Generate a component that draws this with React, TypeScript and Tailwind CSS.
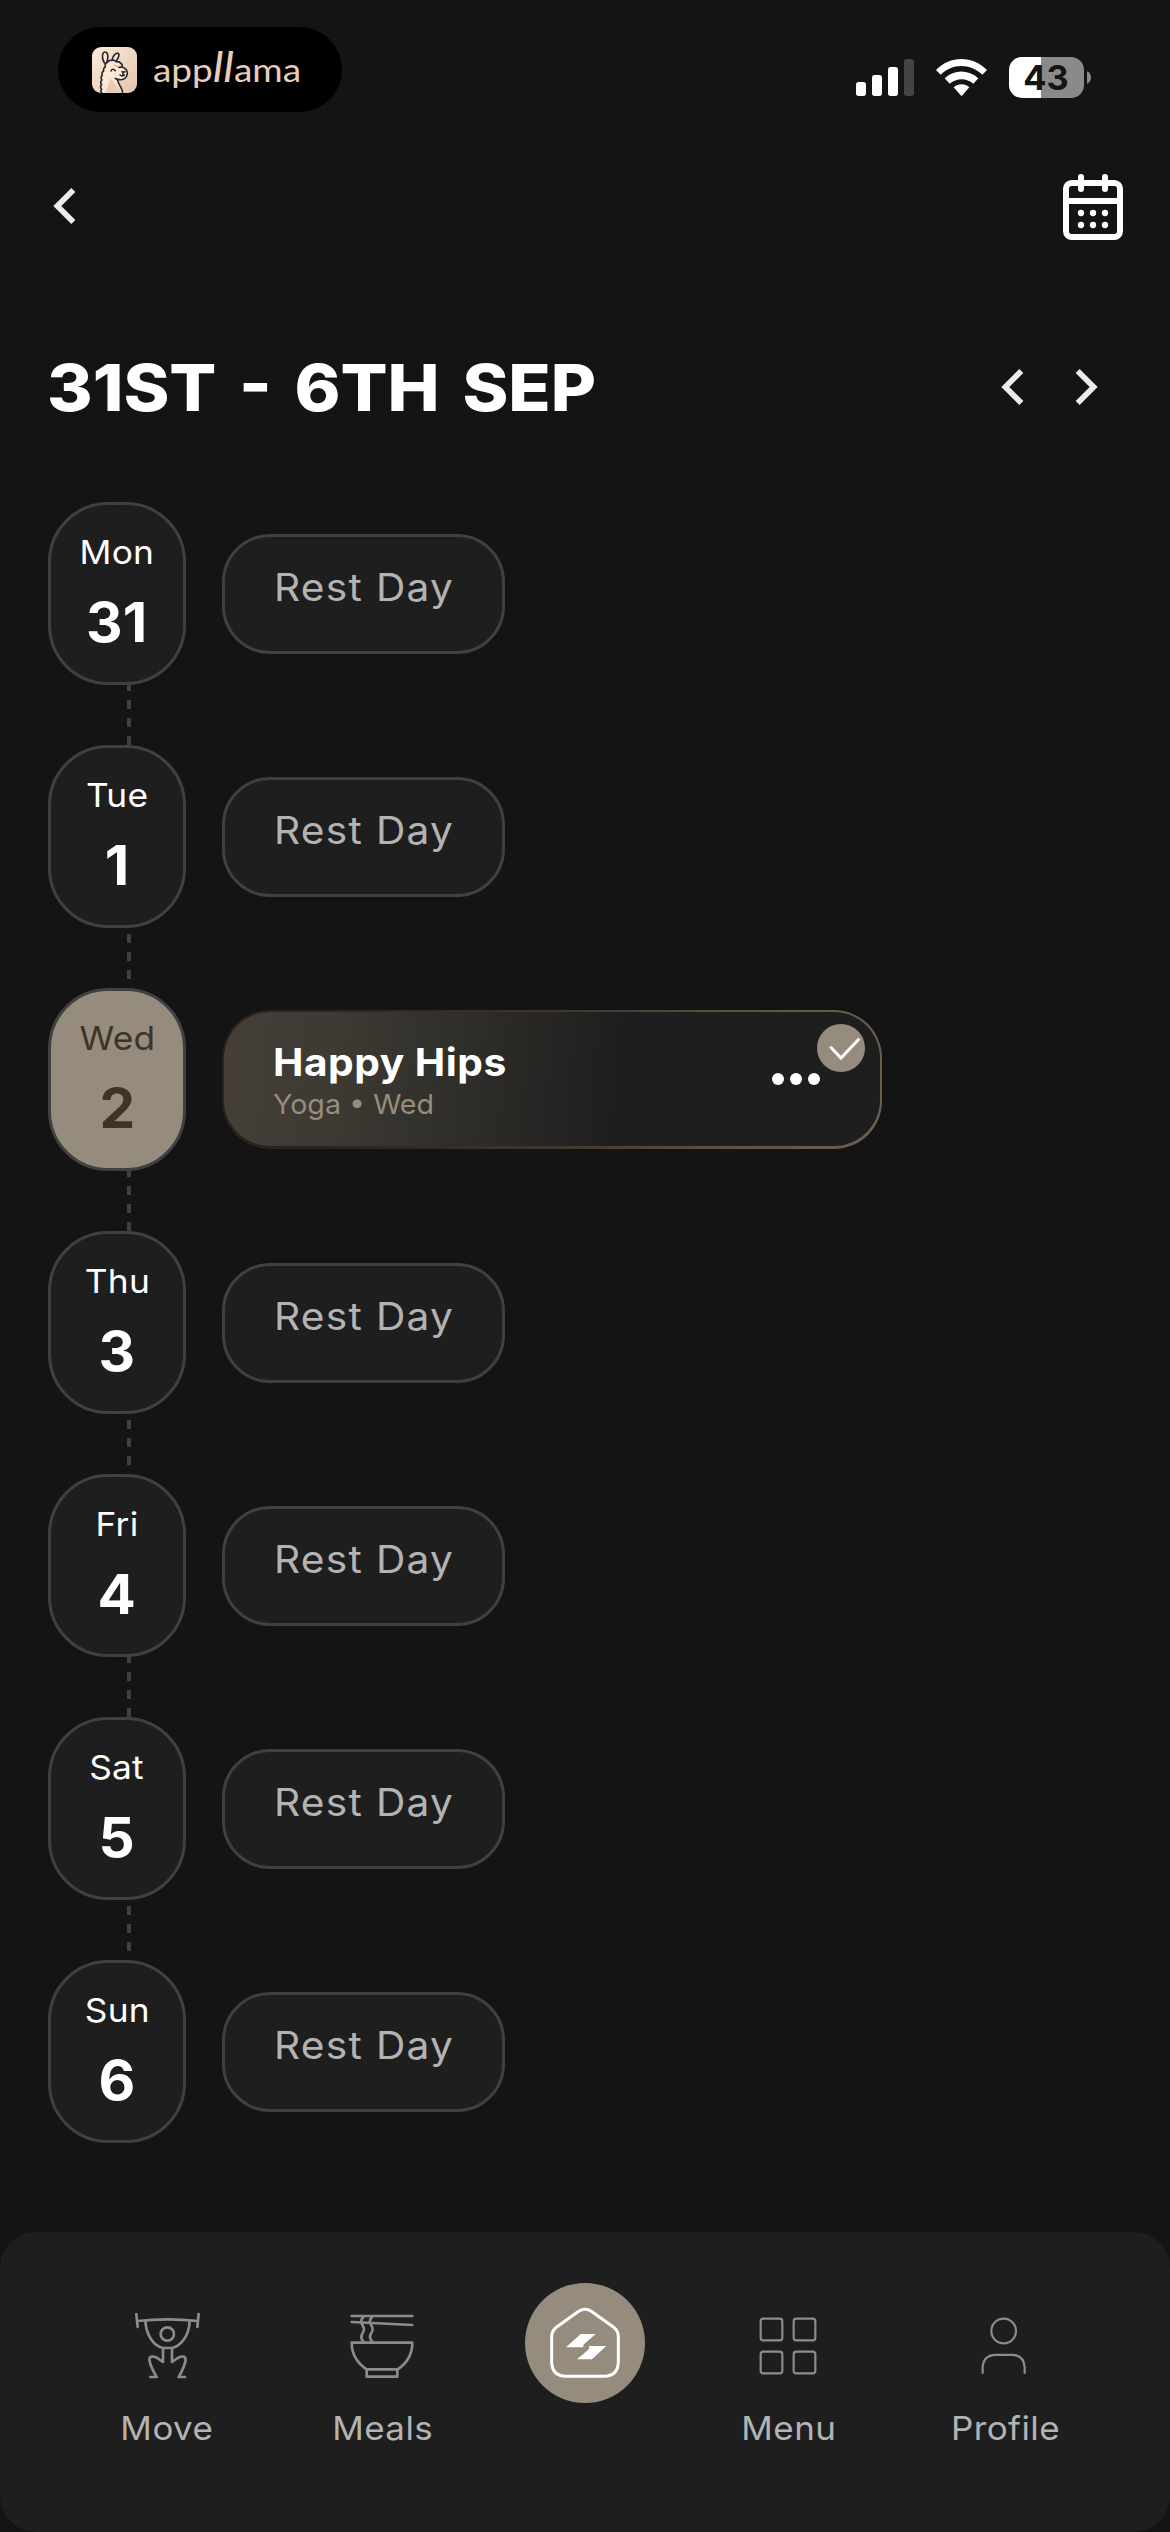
import React from "react";

type Day = { name: string; date: string; active?: boolean };

const days: Day[] = [
  { name: "Mon", date: "31" },
  { name: "Tue", date: "1" },
  { name: "Wed", date: "2", active: true },
  { name: "Thu", date: "3" },
  { name: "Fri", date: "4" },
  { name: "Sat", date: "5" },
  { name: "Sun", date: "6" },
];

function BrandPill() {
  return (
    <div className="flex h-[85px] w-[284px] items-center rounded-full bg-black pl-[34px]">
      <svg className="h-[46px] w-[45px] shrink-0" viewBox="160 108 135 138" fill="none">
        <defs>
          <linearGradient id="tile" x1="0" y1="0" x2="1" y2="1">
            <stop offset="0" stopColor="#fbe9da" />
            <stop offset="1" stopColor="#e6c6ab" />
          </linearGradient>
          <clipPath id="tileClip">
            <rect x="160" y="108" width="135" height="138" rx="27" />
          </clipPath>
        </defs>
        <g clipPath="url(#tileClip)">
          <rect x="160" y="108" width="135" height="138" fill="url(#tile)" />
          <path
            d="M188 248q-6-8 0-14-7-7 0-14-6-7 1-14-5-8 2-13-3-8 4-13-2-8 4-12-1-7 3-10c-8-10-11-36 0-35 9 0 10 14 6 30q6-4 12-3c2-10 10-26 16-23 7 3 3 17-4 26 8 0 14 5 15 12q6 4 2 9c10 0 19 8 18 17 0 10-8 16-19 17q-10 0-15-2c0 14 13 25 17 43z"
            fill="#fbe8d8"
          />
          <path d="M216 202c13 16 22 26 34 44h-50z" fill="#ecccb0" />
          <g stroke="#25272a" strokeWidth="4.8" strokeLinecap="round" strokeLinejoin="round">
            <path d="M190 246q-6-5-1-12-7-6 0-13-6-7 1-14-6-8 1-14-4-8 4-13-2-9 5-12-2-7 2-10" />
            <path d="M200 158c-11-9-12-37 0-35 10 1 9 20 4 32" />
            <path d="M206 154q5-7 14-6c1-9 10-24 18-21 6 3 1 15-6 24" />
            <path d="M220 148q8-2 12 4 11-1 16 6 6 6 0 9-4 4-8 1M249 168c12 2 18 12 17 20-1 12-11 19-23 18q-9 0-13-4" />
            <path d="M217 180q5-10 13-1M244 192q6 5 13 0M253 186v5M250 182q5 2 9 0M237 206c0 13 13 21 15 39" />
          </g>
          <path d="M225 162q8 7 18 4" stroke="#cf9f77" strokeWidth="3" />
        </g>
      </svg>
      <svg className="ml-[15px] h-[60px] w-[154px]" viewBox="0 0 154 60">
        <text
          x="1"
          y="42"
          fill="#e8cdb9"
          fontSize="33"
          textLength="148"
          lengthAdjust="spacingAndGlyphs"
          fontFamily="Lato, sans-serif"
        >
          app
          <tspan fontSize="42" fontStyle="italic">ll</tspan>
          ama
        </text>
      </svg>
    </div>
  );
}

function StatusIcons() {
  return (
    <svg className="h-[43px] w-[237px]" viewBox="75 48 711 129" fill="none">
      <g fill="#fff">
        <rect x="78" y="126" width="30" height="42" rx="8" />
        <rect x="126" y="105" width="30" height="63" rx="8" />
        <rect x="174" y="81" width="30" height="87" rx="8" />
        <rect x="222" y="57" width="30" height="111" rx="8" fill="#444" />
        <path d="M318 90C360 46 428 46 471 90L457 104C422 69 366 69 332 104Z" />
        <path d="M344 115C373 88 415 88 445 115L430 131C410 113 380 113 359 131Z" />
        <path d="M371 142C384 130 405 130 418 142L397 166Q394.500 169 392 166Z" />
      </g>
      <defs>
        <clipPath id="battery">
          <rect x="537" y="51" width="225" height="123" rx="39" />
        </clipPath>
      </defs>
      <g clipPath="url(#battery)">
        <rect x="537" y="51" width="96" height="123" fill="#fff" />
        <rect x="633" y="51" width="130" height="123" fill="#8a8a8a" />
      </g>
      <path d="M771 94c8 3 12 10 12 18.500s-4 15.500-12 18.500z" fill="#8a8a8a" />
      <text
        x="648"
        y="150"
        textAnchor="middle"
        fill="#141414"
        fontSize="103"
        fontWeight="700"
        textLength="136"
        fontFamily="Inter, sans-serif"
      >
        43
      </text>
    </svg>
  );
}

function CalendarIcon() {
  return (
    <svg className="h-[70px] w-[64px]" viewBox="693 396 192 210" fill="none" stroke="#fff" strokeWidth="18">
      <rect x="708" y="429" width="162" height="162" rx="17" />
      <path d="M708 483h162" />
      <path d="M753 411v36M825 411v36" strokeLinecap="round" />
      <g fill="#fff" stroke="none">
        {[753, 789, 825].map((x) => (
          <g key={x}>
            <circle cx={x} cy="519" r="9.500" />
            <circle cx={x} cy="555" r="9.500" />
          </g>
        ))}
      </g>
    </svg>
  );
}

function Chevron({ flip }: { flip?: boolean }) {
  return (
    <svg
      className={flip ? "h-[40px] w-[27px] -scale-x-100" : "h-[40px] w-[27px]"}
      viewBox="120 81 81 120"
      fill="none"
      stroke="#ececec"
      strokeWidth="17"
    >
      <path d="M184 93L136 141L184 189" />
    </svg>
  );
}

function RestPill() {
  return (
    <div className="h-[120px] w-[283px] rounded-[48px] border-[3px] border-[#404040] bg-[#1e1e1e] pt-[26px] pl-[49px]">
      <p className="origin-left scale-x-107 text-[38px] leading-[48px] tracking-[1.2px] whitespace-nowrap text-[#b3b3b3]">
        Rest Day
      </p>
    </div>
  );
}

function WorkoutCard() {
  return (
    <div className="h-[139px] w-[660px] rounded-[48px] bg-[linear-gradient(95deg,#25221f_0%,#2b2721_20%,#40372d_52%,#5c503f_75%,#6c5f4d_100%)] pt-[2px] pr-[2px] pb-[3px] pl-[2px]">
      <div className="relative h-full rounded-[46px] bg-[linear-gradient(95deg,#453f38_0%,#3d3933_18%,#31302b_33%,#272624_48%,#1e1e1e_60%)] pt-[26px] pl-[49px]">
        <p className="w-fit origin-left scale-x-107 text-[38px] leading-[48px] font-bold tracking-[0.5px] text-white">
          Happy Hips
        </p>
        <p className="mt-px w-fit origin-left scale-x-104 text-[27.5px] leading-[34px] text-[#978c7d]">Yoga • Wed</p>
        <svg className="absolute top-[9px] right-[8px] h-[60px] w-[108px]" viewBox="0 0 108 60" fill="none">
          <circle cx="77" cy="27" r="24" fill="#968c7d" />
          <path d="M67 26.500L77 37L94.500 18.500" stroke="#fff" strokeWidth="3" strokeLinecap="round" />
        </svg>
        <div className="absolute top-[61px] right-[60px] flex gap-[6px]">
          <span className="size-3 rounded-full bg-white" />
          <span className="size-3 rounded-full bg-white" />
          <span className="size-3 rounded-full bg-white" />
        </div>
      </div>
    </div>
  );
}

function DayRow({ day, index }: { day: Day; index: number }) {
  const dash =
    index % 2 === 0
      ? "ml-[79px] h-[60px] w-[4px] bg-[repeating-linear-gradient(to_bottom,#404040_0px,#404040_6px,transparent_6px,transparent_15px,#404040_15px,#404040_18px)]"
      : "ml-[79px] h-[60px] w-[4px] bg-[repeating-linear-gradient(to_bottom,transparent_0px,transparent_6px,#404040_6px,#404040_15px,transparent_15px,transparent_18px)]";
  return (
    <div>
      <div className="flex items-center gap-9">
        <div
          className={
            "flex h-[183px] w-[138px] flex-col items-center rounded-[60px] border-[3px] border-[#404040] pt-[27px] " +
            (day.active ? "bg-[#968c7d] text-[#3d3327]" : "bg-[#1e1e1e] text-white")
          }
        >
          <span className="scale-x-107 text-[33px] leading-[40px] tracking-[0.2px]">{day.name}</span>
          <span className="mt-5 scale-x-103 text-[55px] leading-[60px] font-bold">{day.date}</span>
        </div>
        {day.active ? <WorkoutCard /> : <RestPill />}
      </div>
      {index < days.length - 1 && <div className={dash} />}
    </div>
  );
}

function NavItem({ label, children }: { label: string; children: React.ReactNode }) {
  return (
    <div className="flex w-[216px] flex-col items-center pt-[78px]">
      {children}
      <span className="mt-[26px] ml-[2px] scale-x-106 text-[33px] leading-[40px] tracking-[0.4px] text-[#b3b3b3]">
        {label}
      </span>
    </div>
  );
}

function BottomNav() {
  return (
    <nav className="mt-[89px] flex h-[300px] rounded-[36px] bg-[#1e1e1e] pl-[58px]">
      <NavItem label="Move">
        <svg className="size-[72px]" viewBox="90 120 216 216" fill="none" stroke="#8c8c8c" strokeWidth="8" strokeLinecap="round" strokeLinejoin="round">
          <path d="M109 132L113 171M296 132L292 171M112 153Q202 143 293 153" />
          <path d="M136 152C138 196 162 230 190 234H215C244 229 268 195 269 152" />
          <circle cx="202" cy="192" r="20" />
          <path d="M189 235V276L170 263C156 256 145 259 149 275C153 292 161 306 170 321H151" />
          <path d="M216 235V276L235 263C249 256 260 259 256 275C252 292 245 306 236 321H255" />
        </svg>
      </NavItem>
      <NavItem label="Meals">
        <svg className="size-[72px]" viewBox="738 120 216 216" fill="none" stroke="#8c8c8c" strokeWidth="8" strokeLinecap="round" strokeLinejoin="round">
          <path d="M755 138H937M755 156L937 165" />
          <path d="M790 141C780 152 783 158 789 168C795 178 792 184 786 193C782 201 784 207 789 214" />
          <path d="M816 141C806 152 809 158 815 168C821 178 818 184 812 193C808 201 810 207 816 214" />
          <path d="M755 218H937C937 252 921 279 893 298H800C772 279 755 252 755 218Z" />
          <path d="M800 299V320H892V299" />
        </svg>
      </NavItem>
      <div className="flex w-[190px] justify-center pt-[51px]">
        <svg className="size-[120px]" viewBox="75 69 360 360" fill="none">
          <circle cx="255" cy="249" r="180" fill="#968c7d" />
          <path
            d="M236 154Q255 142 274 154L340 201Q355 212 355 229V307Q353 348 313 348.500H197Q157 348 155 307V229Q155 212 170 201Z"
            stroke="#fff"
            strokeWidth="9"
            strokeLinejoin="round"
          />
          <path d="M242 222H287L255 250Q249 254 249 262H198Z" fill="#fff" />
          <path d="M267 258H319L276 298H231L265 269Q270 264 267 258Z" fill="#fff" />
        </svg>
      </div>
      <NavItem label="Menu">
        <svg className="size-[72px]" viewBox="156 90 216 216" fill="none" stroke="#8c8c8c" strokeWidth="6.500">
          <rect x="182" y="116" width="65" height="65" rx="8" />
          <rect x="281" y="116" width="65" height="65" rx="8" />
          <rect x="182" y="215" width="65" height="65" rx="8" />
          <rect x="281" y="215" width="65" height="65" rx="8" />
        </svg>
      </NavItem>
      <NavItem label="Profile">
        <svg className="size-[72px]" viewBox="802 90 216 216" fill="none" stroke="#8c8c8c" strokeWidth="6.500" strokeLinecap="round">
          <circle cx="909" cy="153" r="37" />
          <path d="M846 279V262Q848 226 884 224.500H936Q970 226 972 262V279" />
        </svg>
      </NavItem>
    </nav>
  );
}

export default function App() {
  return (
    <div className="h-[2532px] w-[1170px] overflow-hidden bg-[#141414] font-[Inter,sans-serif] text-white">
      <header className="pt-[27px] pr-[45px] pl-[48px]">
        <div className="flex h-[85px] items-start justify-between pr-[33px] pl-[10px]">
          <BrandPill />
          <div className="pt-[29px]">
            <StatusIcons />
          </div>
        </div>
        <div className="mt-[60px] flex items-start justify-between">
          <div className="pt-[14px] pl-[4px]">
            <Chevron />
          </div>
          <CalendarIcon />
        </div>
      </header>
      <main>
        <div className="mt-[106px] flex items-start justify-between pr-[71px] pl-[47px]">
          <h1 className="origin-left scale-x-107 text-[65px] leading-[80px] font-extrabold whitespace-nowrap [word-spacing:7px]">
            31ST - 6TH SEP
          </h1>
          <div className="flex gap-[45px] pt-[19px]">
            <Chevron />
            <Chevron flip />
          </div>
        </div>
        <div className="mt-[74px] pl-12">
          {days.map((day, index) => (
            <DayRow key={day.name} day={day} index={index} />
          ))}
        </div>
      </main>
      <BottomNav />
    </div>
  );
}
